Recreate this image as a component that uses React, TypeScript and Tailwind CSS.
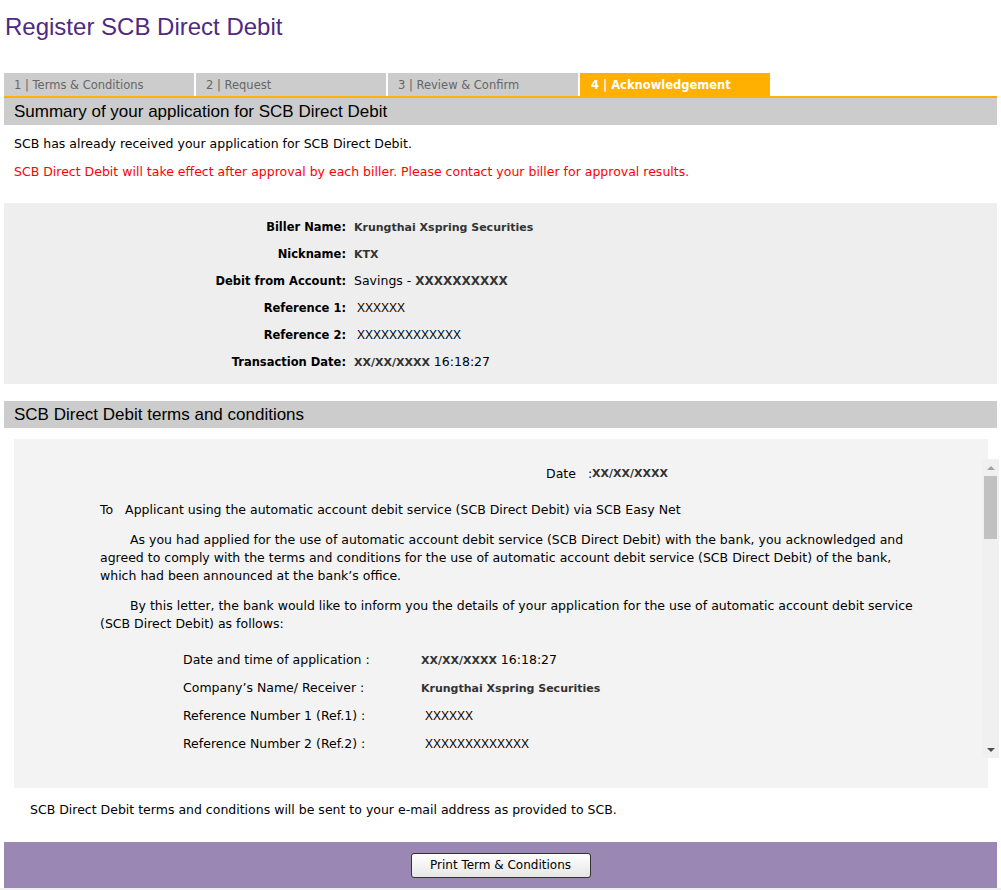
const tabs = [
  { label: '1 | Terms & Conditions', active: false },
  { label: '2 | Request', active: false },
  { label: '3 | Review & Confirm', active: false },
  { label: '4 | Acknowledgement', active: true },
];

const masked = "font-['Liberation_Sans',sans-serif] text-[12px]";

const summary = [
  { label: 'Biller Name:', value: <span className="font-bold text-[#333] text-[11px]">Krungthai Xspring Securities</span> },
  { label: 'Nickname:', value: <span className="font-bold text-[#333] text-[11px]">KTX</span> },
  {
    label: 'Debit from Account:',
    value: (
      <span>
        Savings - <span className="font-bold text-[#333] text-[12px]">XXXXXXXXXX</span>
      </span>
    ),
  },
  { label: 'Reference 1:', value: <span className={`pl-[3px] ${masked}`}>XXXXXX</span> },
  { label: 'Reference 2:', value: <span className={`pl-[3px] ${masked}`}>XXXXXXXXXXXXX</span> },
  {
    label: 'Transaction Date:',
    value: (
      <span>
        <span className="font-bold text-[#333] text-[11px]">XX/XX/XXXX</span> 16:18:27
      </span>
    ),
  },
];

const details = [
  {
    label: 'Date and time of application :',
    value: (
      <span>
        <span className="font-bold text-[#333] text-[11px]">XX/XX/XXXX</span> 16:18:27
      </span>
    ),
  },
  { label: 'Company\u2019s Name/ Receiver :', value: <span className="font-bold text-[#333] text-[11px]">Krungthai Xspring Securities</span> },
  { label: 'Reference Number 1 (Ref.1) :', value: <span className={`pl-[4px] ${masked}`}>XXXXXX</span> },
  { label: 'Reference Number 2 (Ref.2) :', value: <span className={`pl-[4px] ${masked}`}>XXXXXXXXXXXXX</span> },
];

function SectionHeader({ title }: { title: string }) {
  return (
    <div className="mx-[4px] h-[27px] bg-[#cccccc] pl-[10px] pt-[1px] flex items-center font-['Liberation_Sans',sans-serif] text-[17px] text-black">
      {title}
    </div>
  );
}

// drawn scrollbar of the embedded letter frame
function FakeScrollbar() {
  return (
    <div className="absolute top-[20px] right-[-11px] w-[17px] h-[299px] bg-[#f0f0f0] flex flex-col items-center">
      <div className="h-[17px] flex items-center justify-center">
        <div className="w-0 h-0 border-l-[4px] border-r-[4px] border-b-[4px] border-l-transparent border-r-transparent border-b-[#a3a3a3]" />
      </div>
      <div className="w-[13px] h-[63px] bg-[#c1c1c1]" />
      <div className="flex-1" />
      <div className="h-[17px] flex items-center justify-center">
        <div className="w-0 h-0 border-l-[4px] border-r-[4px] border-t-[4px] border-l-transparent border-r-transparent border-t-[#505050]" />
      </div>
    </div>
  );
}

export default function App() {
  return (
    <div className="w-[1001px] h-[890px] bg-white font-['DejaVu_Sans',sans-serif] text-[12.5px] text-black overflow-hidden">
      <h1 className="h-[73px] pl-[5px] pt-[13px] font-['Liberation_Sans',sans-serif] text-[24px] leading-[28px] text-[#4e2a84]">
        Register SCB Direct Debit
      </h1>

      <div className="mx-[4px] flex gap-[2px] h-[25px] border-b-2 border-[#ffb000]">
        {tabs.map((t) => (
          <div
            key={t.label}
            className={
              t.active
                ? 'w-[190px] h-[23px] bg-[#ffb000] pl-[11px] pt-[2px] flex items-center text-[11.5px] font-bold text-white'
                : 'w-[190px] h-[23px] bg-[#cccccc] pl-[10px] pt-[2px] flex items-center text-[11.5px] text-[#666]'
            }
          >
            {t.label}
          </div>
        ))}
      </div>

      <SectionHeader title="Summary of your application for SCB Direct Debit" />

      <div className="px-[14px] pt-[10px] h-[78px]">
        <p className="h-[18px] leading-[18px]">SCB has already received your application for SCB Direct Debit.</p>
        <p className="mt-[10px] h-[18px] leading-[18px] text-[#ff0000]">
          SCB Direct Debit will take effect after approval by each biller. Please contact your biller for approval results.
        </p>
      </div>

      <div className="mx-[4px] bg-[#eeeeee] pt-[11px] pb-[8px]">
        {summary.map((row) => (
          <div key={row.label} className="h-[27px] flex items-center">
            <div className="w-[342px] text-right font-bold text-[11.5px]">{row.label}</div>
            <div className="pl-[8px]">{row.value}</div>
          </div>
        ))}
      </div>

      <div className="h-[17px]" />
      <SectionHeader title="SCB Direct Debit terms and conditions" />

      <div className="relative mt-[11px] ml-[14px] w-[974px] h-[349px] bg-[#f3f3f3]">
        <FakeScrollbar />
        <div className="pt-[26px]">
          <div className="pl-[532px] h-[18px] leading-[18px] flex items-center">
            <span>Date</span>
            <span className="pl-[12px]">:</span>
            <span className="font-bold text-[#333] text-[11px]">XX/XX/XXXX</span>
          </div>
        </div>
        <div className="mt-[18px] pl-[86px] leading-[18px]">
          To&nbsp;&nbsp;&nbsp;Applicant using the automatic account debit service (SCB Direct Debit) via SCB Easy Net
        </div>
        <p className="mt-[12px] pl-[86px] leading-[18px]">
          <span className="pl-[30px]" />
          As you had applied for the use of automatic account debit service (SCB Direct Debit) with the bank, you acknowledged and
          <br />
          agreed to comply with the terms and conditions for the use of automatic account debit service (SCB Direct Debit) of the bank,
          <br />
          which had been announced at the bank&rsquo;s office.
        </p>
        <p className="mt-[12px] pl-[86px] leading-[18px]">
          <span className="pl-[30px]" />
          By this letter, the bank would like to inform you the details of your application for the use of automatic account debit service
          <br />
          (SCB Direct Debit) as follows:
        </p>
        <div className="mt-[13px] pl-[169px]">
          {details.map((row) => (
            <div key={row.label} className="h-[28px] flex items-center">
              <div className="w-[238px]">{row.label}</div>
              <div>{row.value}</div>
            </div>
          ))}
        </div>
      </div>

      <div className="h-[54px] pl-[30px] pt-[13px] leading-[18px]">
        SCB Direct Debit terms and conditions will be sent to your e-mail address as provided to SCB.
      </div>

      <div className="mx-[4px] h-[46px] bg-[#9b87b3] flex items-center justify-center">
        <button className="w-[180px] h-[25px] rounded-[3px] border border-[#333] bg-gradient-to-b from-white to-[#e6e6e6] text-[12px] text-black">
          Print Term &amp; Conditions
        </button>
      </div>
      <div className="h-[2px] bg-[#f0f0f0]" />
    </div>
  );
}
